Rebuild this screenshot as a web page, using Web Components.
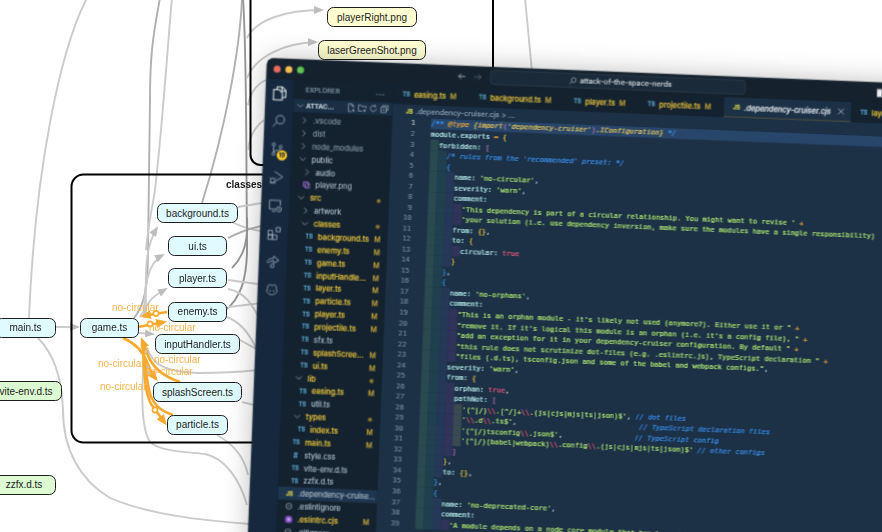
<!DOCTYPE html>
<html lang="en"><head><meta charset="utf-8"><title>Dependency graph and editor</title>
<style>
html,body{margin:0;padding:0;width:882px;height:532px;overflow:hidden;background:#fff}
</style></head>
<body>
<dep-graph>
  <graph-node x="327" y="7" w="90" h="20" kind="img">playerRight.png</graph-node>
  <graph-node x="318" y="40" w="108" h="20" kind="img">laserGreenShot.png</graph-node>
  <graph-node x="157" y="203" w="81" h="20">background.ts</graph-node>
  <graph-node x="168" y="236" w="59" h="20">ui.ts</graph-node>
  <graph-node x="168" y="268" w="59" h="20">player.ts</graph-node>
  <graph-node x="168" y="302" w="59" h="19.5">enemy.ts</graph-node>
  <graph-node x="80" y="317.5" w="59" h="20">game.ts</graph-node>
  <graph-node x="-5" y="317.5" w="61" h="20">main.ts</graph-node>
  <graph-node x="155" y="334" w="85" h="20">inputHandler.ts</graph-node>
  <graph-node x="153" y="382" w="89" h="20">splashScreen.ts</graph-node>
  <graph-node x="167" y="415" w="61" h="19.5">particle.ts</graph-node>
  <graph-node x="-10" y="381" w="72" h="20" kind="dts">vite-env.d.ts</graph-node>
  <graph-node x="-8" y="475" w="64" h="19.5" kind="dts">zzfx.d.ts</graph-node>
</dep-graph>

<vs-window>
  <activity-bar slot="activity"></activity-bar>
  <file-tree slot="tree"></file-tree>
  <tab-strip slot="tabs"></tab-strip>
  <bread-crumb slot="crumb"></bread-crumb>
  <code-view slot="code"></code-view>
</vs-window>

<script>
const FONT_UI = '"Inter","Liberation Sans",sans-serif';
const FONT_MONO = '"DejaVu Sans Mono","Liberation Mono",monospace';

/* ---------- dependency graph ---------- */
class DepGraph extends HTMLElement{
  constructor(){
    super();
    const gray=[
      ['M87,-2 C60,50 35,170 29,318'],
      ['M160,-2 C152,40 150,60 150,100 L148,250 C148,285 145,305 134,318','d'],
      ['M172,-2 C168,40 163,120 155,190 C152,210 148,225 146,250'],
      ['M146,318 C146,280 143,250 157,228','','url(#ag)'],
      ['M144,318 C144,290 146,264 163,255','','url(#ag)'],
      ['M140,317 C150,300 150,298 166,289','','url(#ag)'],
      ['M242,-2 C240,50 225,130 202,203','d'],
      ['M243,-2 C247,60 246,150 247,240 C248,280 240,300 224,311','k'],
      ['M247,38 C256,20 285,10 322,10','','url(#ag)'],
      ['M247,78 C256,56 285,43 316,42','','url(#ag)'],
      ['M266,80 C255,85 250,95 248,105'],
      ['M264,120 C255,127 250,135 248,150'],
      ['M525,-2 C528,30 530,50 532,72'],
      ['M238,207 L262,203'],
      ['M232,222 C240,226 250,230 262,231'],
      ['M228,238 C240,232 250,228 262,226','d'],
      ['M247,217 C248,240 245,255 232,268','k'],
      ['M228,280 L258,284'],
      ['M228,289 C245,292 252,305 258,316'],
      ['M228,307 L262,303'],
      ['M227,317 C240,322 250,335 256,348'],
      ['M240,340 L258,350'],
      ['M242,402 L258,406'],
      ['M56,327 L78,327','','url(#ag)'],
      ['M139,333 L153,334','','url(#ag)'],
      ['M38,338 C55,355 62,380 63,410 C63,450 80,480 110,498 C150,515 200,520 250,524'],
      ['M145,345 C140,400 142,430 150,442 C160,452 190,452 205,454 C225,458 240,480 247,505'],
      ['M147,347 C152,365 165,372 200,373 C225,373 240,372 258,370'],
      ['M217,435 C235,445 245,460 248,475'],
    ].map(([d,c,m])=>`<path class="e ${c||''}" d="${d}" ${m?`marker-end="${m}"`:''}/>`).join('');
    const orange=[
      ['M167,312 L143,316','url(#ao)'],
      ['M138,327 L164,322','url(#ao)'],
      ['M123,338 C135,343 143,352 147,362 C150,370 152,374 156,379','url(#ao)'],
      ['M180,382 C165,377 152,368 147,353 L142,340','url(#ao)'],
      ['M143,347 C144,375 145,392 151,404 L165,423','url(#ao)'],
      ['M173,415 C160,411 152,404 149,390 C146,375 145,360 143,350',''],
    ].map(([d,m])=>`<path class="o" d="${d}" ${m?`marker-end="${m}"`:''}/>`).join('');
    const rings=[[156,313.5],[150,324],[155,410]].map(([x,y])=>`<circle class="r" cx="${x}" cy="${y}" r="2.6"/>`).join('')
      +[[146,352],[148,367],[148.5,373]].map(([x,y])=>`<circle class="r2" cx="${x}" cy="${y}" r="2"/>`).join('');
    const labels=[[112,310.5],[149,330.5],[154,362.5],[98,366.5],[146,374.5],[100,389.5]]
      .map(([x,y])=>`<text class="l" x="${x}" y="${y}">no-circular</text>`).join('');
    this.attachShadow({mode:'open'}).innerHTML=`
    <style>
      :host{display:block;position:relative;width:882px;height:532px;overflow:hidden;filter:blur(.35px);font-family:"Liberation Sans",Arial,sans-serif}
      svg{position:absolute;left:0;top:0}
      .e{fill:none;stroke:#cbcbcb;stroke-width:1.9}
      .e.d{stroke:#b0b0b0}
      .e.k{stroke:#969696}
      .o{fill:none;stroke:#f7a92e;stroke-width:2.6}
      .r{fill:#fff;stroke:#f7a92e;stroke-width:1.6}
      .r2{fill:#c8c4b8;stroke:#f7a92e;stroke-width:1}
      .f{fill:none;stroke:#000;stroke-width:2}
      .t{font-size:10px;font-weight:700;fill:#1a1a1a}
      .l{font-size:10px;fill:#f9b44e}
    </style>
    <svg width="882" height="532" viewBox="0 0 882 532">
      <defs>
        <marker id="ag" markerWidth="10" markerHeight="8" refX="8" refY="4" orient="auto" markerUnits="userSpaceOnUse"><path d="M0,0 L10,4 L0,8 Z" fill="#bdbdbd"/></marker>
        <marker id="ao" markerWidth="11" markerHeight="9" refX="8" refY="4.5" orient="auto" markerUnits="userSpaceOnUse"><path d="M0,0 L11,4.5 L0,9 Z" fill="#f7a92e"/></marker>
      </defs>
      ${gray}
      <rect class="f" x="71.5" y="174.5" width="300" height="268" rx="12"/>
      <rect class="f" x="250.5" y="-30" width="242.5" height="195" rx="10"/>
      <text class="t" x="226" y="187.5">classes</text>
      ${orange}${rings}${labels}
    </svg>
    <slot></slot>`;
  }
}
customElements.define('dep-graph',DepGraph);

class GraphNode extends HTMLElement{
  constructor(){
    super();
    this.attachShadow({mode:'open'}).innerHTML=`
    <style>
      :host{position:absolute;display:flex;align-items:center;justify-content:center;box-sizing:border-box;
        border:1.2px solid #1e1e1e;border-radius:6.5px;background:#e0fbff;color:#1d1d1d;
        font:10px "Liberation Sans",Arial,sans-serif;white-space:nowrap}
      :host([kind="img"]){background:#ffffd2}
      :host([kind="dts"]){background:#dcfbd2}
    </style><slot></slot>`;
  }
  connectedCallback(){
    const a=n=>this.getAttribute(n)+'px';
    Object.assign(this.style,{left:a('x'),top:a('y'),width:a('w'),height:a('h')});
  }
}
customElements.define('graph-node',GraphNode);

/* ---------- VS Code window ---------- */
class VsWindow extends HTMLElement{
  constructor(){
    super();
    this.attachShadow({mode:'open'}).innerHTML=`
    <style>
      :host{position:absolute;left:267px;top:58px;width:1202px;height:900px;display:grid;
        grid-template-rows:35px 1fr;grid-template-columns:48px 170px 1fr;
        transform-origin:0 0;transform:rotate(2.29deg) scale(.585);
        border-radius:11px;overflow:hidden;background:#15222e;
        box-shadow:0 0 46px rgba(0,0,0,.26);color:#c5d4de;filter:blur(.22px);-webkit-text-stroke:.28px}
      .bar{grid-column:1/4;display:flex;align-items:center;position:relative;background:#15222e;min-width:0}
      .lights{display:flex;gap:8px;padding-left:12px}
      .lights i{width:12px;height:12px;border-radius:50%;display:block}
      .nav{display:flex;gap:11px;margin-left:262px;width:50px;flex:none}
      .search{margin-left:7px;width:436px;height:25px;box-sizing:border-box;border:1px solid #3a4a58;border-radius:6px;
        background:#1b2a38;display:flex;align-items:center;justify-content:center;gap:5px;padding-left:8px;
        font:12.4px ${FONT_UI};color:#d2dbe1}
      .layout{margin-left:auto;margin-right:142px;width:16px;height:14px;border:1.5px solid #eef2f5;box-sizing:border-box;background:linear-gradient(90deg,#eef2f5 50%,transparent 50%)}
      ::slotted([slot=activity]){grid-row:2;grid-column:1}
      ::slotted([slot=tree]){grid-row:2;grid-column:2}
      .main{grid-row:2;grid-column:3;display:flex;flex-direction:column;min-width:0;background:#1c3046}
    </style>
    <div class="bar">
      <div class="lights"><i style="background:#ee6a5f"></i><i style="background:#f5be4f"></i><i style="background:#62c554"></i></div>
      <div class="nav">
        <svg width="16" height="16" viewBox="0 0 16 16" fill="none" stroke="#c8d2da" stroke-width="1.3"><path d="M14 8H2.5M7 3.5 2.5 8 7 12.5"/></svg>
        <svg width="16" height="16" viewBox="0 0 16 16" fill="none" stroke="#5f7180" stroke-width="1.3"><path d="M2 8h11.5M9 3.5 13.5 8 9 12.5"/></svg>
      </div>
      <div class="search">
        <svg width="14" height="14" viewBox="0 0 16 16" fill="none" stroke="#c4ced6" stroke-width="1.2"><circle cx="9.5" cy="6.5" r="4.5"/><path d="M6.3 9.7 1.5 14.5"/></svg>
        <span>attack-of-the-space-nerds</span>
      </div>
      <div class="layout"></div>
    </div>
    <slot name="activity"></slot>
    <slot name="tree"></slot>
    <div class="main"><slot name="tabs"></slot><slot name="crumb"></slot><slot name="code"></slot></div>`;
  }
}
customElements.define('vs-window',VsWindow);

class ActivityBar extends HTMLElement{
  constructor(){
    super();
    const s='fill="none" stroke="#a9bccb" stroke-width="1.3"';
    const icons=[
      `<svg width="28" height="28" viewBox="0 0 24 24" fill="none" stroke="#f2f6f9" stroke-width="1.5"><path d="M8 7V3h8l5 5v10h-5"/><path d="M15 3v6h6"/><path d="M3 7h8l5 5v10H3z"/></svg>`,
      `<svg width="26" height="26" viewBox="0 0 24 24" ${s}><circle cx="14.5" cy="9.5" r="6.5"/><path d="M9.5 14 3 21"/></svg>`,
      `<svg width="26" height="26" viewBox="0 0 24 24" ${s}><circle cx="6" cy="4.5" r="2.3"/><circle cx="6" cy="19.5" r="2.3"/><circle cx="17" cy="8" r="2.3"/><path d="M6 7v10M17 10.5c0 4-11 3-11 6.5"/></svg><em>19</em>`,
      `<svg width="26" height="26" viewBox="0 0 24 24" ${s}><path d="M9 3l13 8-11 7"/><circle cx="6.5" cy="17" r="3.6"/><path d="M1.5 21h10M3 14l-1.5-1.5M10 14l1.5-1.5"/></svg>`,
      `<svg width="26" height="26" viewBox="0 0 24 24" ${s}><path d="M13 18H3V4h17v8"/><path d="M7 21.5h6"/><circle cx="18" cy="18" r="4"/><path d="M18 16v2.3l1.5 1"/></svg>`,
      `<svg width="26" height="26" viewBox="0 0 24 24" ${s}><rect x="2.5" y="7.5" width="7" height="7"/><rect x="2.5" y="14.5" width="7" height="7"/><rect x="9.5" y="14.5" width="7" height="7"/><rect x="15" y="2.5" width="6.5" height="6.5"/></svg>`,
      `<svg width="26" height="26" viewBox="0 0 24 24" ${s}><path d="M3 14c0-5 5-7 10-7V3.5L21 10l-8 5v-4c-4 0-6 1-8.500 4"/><circle cx="11" cy="19" r="2.800"/></svg>`,
      `<svg width="24" height="24" viewBox="0 0 24 24" ${s}><path d="M5 11c-2-5 1-7 4-7 1.500 0 2.500 1 3 2 .5-1 1.500-2 3-2 3 0 6 2 4 7 1.500 1 2 2.500 2 4-2 4-6 6-9 6s-7-2-9-6c0-1.500.5-3 2-4z"/><path d="M9 13v3M15 13v3"/></svg>`
    ];
    this.attachShadow({mode:'open'}).innerHTML=`
    <style>
      :host{display:flex;flex-direction:column;background:#15283d;position:relative}
      div{height:48px;display:flex;align-items:center;justify-content:center;position:relative;flex:none}
      div:first-child::before{content:"";position:absolute;left:0;top:0;bottom:0;width:2px;background:#e8eef2}
      em{position:absolute;left:23px;top:25px;width:18px;height:18px;border-radius:50%;background:#f3c62b;color:#182430;
        font:600 10px/18px ${FONT_UI};text-align:center}
    </style>${icons.map(i=>`<div>${i}</div>`).join('')}`;
  }
}
customElements.define('activity-bar',ActivityBar);

const ICON_STYLE=`
  .ti{font:700 9.500px ${FONT_UI};letter-spacing:0}
  .ts{color:#5aa2c6}.js{color:#d4d44e}
`;
class FileTree extends HTMLElement{
  constructor(){
    super();
    const R=`<svg width="16" height="16" viewBox="0 0 16 16" fill="none" stroke="#a9b8c4" stroke-width="1.2"><path d="M5.500 3 10.500 8 5.500 13"/></svg>`;
    const D=`<svg width="16" height="16" viewBox="0 0 16 16" fill="none" stroke="#a9b8c4" stroke-width="1.2"><path d="M3 5.500 8 10.500 13 5.500"/></svg>`;
    const rows=[
      [0,'r','.vscode','dim'],[0,'r','dist','dim'],[0,'r','node_modules','dim'],
      [0,'d','public','nor'],[1,'r','audio','nor'],[1,'png','player.png','dim2'],
      [0,'d','src','mod','dot'],[1,'r','artwork','nor'],[1,'d','classes','mod','dot'],
      [2,'ts','background.ts','mod','M'],[2,'ts','enemy.ts','mod','M'],[2,'ts','game.ts','mod','M'],
      [2,'ts','inputHandle...','mod','M'],[2,'ts','layer.ts','mod','M'],[2,'ts','particle.ts','mod','M'],
      [2,'ts','player.ts','mod','M'],[2,'ts','projectile.ts','mod','M'],[2,'ts','sfx.ts','nor'],
      [2,'ts','splashScree...','mod','M'],[2,'ts','ui.ts','mod','M'],
      [1,'d','lib','mod','dot'],[2,'ts','easing.ts','mod','M'],[2,'ts','util.ts','nor'],
      [1,'d','types','mod','dot'],[2,'ts','index.ts','mod','M'],
      [1,'ts','main.ts','mod','M'],[1,'css','style.css','nor'],[1,'ts','vite-env.d.ts','nor'],[1,'ts','zzfx.d.ts','nor'],
      [0,'js','.dependency-cruise...','nor','','sel'],[0,'ign','.eslintignore','nor'],[0,'pur','.eslintrc.cjs','mod','M'],[0,'ign','.gitignore','nor'],
    ];
    const ic=t=>({r:R,d:D,
      ts:'<span class="ti ts">TS</span>',js:'<span class="ti js">JS</span>',
      css:'<span class="ti" style="color:#5b9fc8;font-size:12px">#</span>',
      png:'<svg width="14" height="14" viewBox="0 0 16 16" fill="none" stroke="#a774d8" stroke-width="1.500"><path d="M2 2h9v9H2z"/><path d="M5 5h9v9H5z"/></svg>',
      ign:'<svg width="14" height="14" viewBox="0 0 16 16" fill="none" stroke="#6c7a84" stroke-width="2"><circle cx="8" cy="8" r="5.500"/><path d="M5 8h6"/></svg>',
      pur:'<svg width="15" height="15" viewBox="0 0 16 16"><circle cx="8" cy="8" r="7" fill="#7c4fc2"/><circle cx="8" cy="8" r="3" fill="#c7a8ee"/></svg>'
    }[t]);
    const html=rows.map(([l,t,n,c,b,sel])=>`<div class="row ${c} ${sel||''}" style="padding-left:${12+8*l}px"><span class="ic">${ic(t)}</span><span class="n">${n}</span>${b==='M'?'<span class="b">M</span>':b==='dot'?'<span class="b"><i></i></span>':''}</div>`).join('');
    const h=(d)=>`<svg width="16" height="16" viewBox="0 0 16 16" fill="none" stroke="#b8c6d1" stroke-width="1.100">${d}</svg>`;
    this.attachShadow({mode:'open'}).innerHTML=`
    <style>
      :host{display:flex;flex-direction:column;background:#14222f;overflow:hidden;font:12.7px ${FONT_UI};min-width:0}
      ${ICON_STYLE}
      .title{height:33px;display:flex;align-items:center;justify-content:space-between;padding:0 14px 0 20px;
        font-size:11px;letter-spacing:.3px;color:#8fa3b2;flex:none}
      .sec{height:22px;margin-bottom:3px;display:flex;align-items:center;background:#1a2f44;padding-left:4px;flex:none;
        font-weight:700;font-size:11px;color:#c3d0da;gap:2px}
      .sec span{flex:1}
      .sec .tools{display:flex;gap:3px;padding-right:6px}
      .row{height:22px;display:flex;align-items:center;flex:none;white-space:pre;color:#a8bac7}
      .ic{width:16px;height:16px;display:flex;align-items:center;justify-content:center;margin-right:7px;flex:none}
      .dim{color:#8597a4}.dim2{color:#a2b0bb}.nor{color:#aebfcb}.mod{color:#e6c43c;font-weight:500}
      .sel{background:#1f3650}
      .n{flex:1;min-width:0}
      .b{width:23px;flex:none;font-size:12px;color:#c8a93c;font-weight:500;display:flex;align-items:center}
      .b i{width:7px;height:7px;border-radius:50%;background:#8f7a2e;display:block;margin-left:2px}
    </style>
    <div class="title"><span>EXPLORER</span><span style="letter-spacing:1.500px;font-weight:700">...</span></div>
    <div class="sec">${D}<span>ATTAC...</span><div class="tools">
      ${h('<path d="M9 1.500H3.500v13h5M9 1.500l3.500 3.500v3M9 1.500V5h3.500M12 10v5M9.500 12.500h5"/>')}
      ${h('<path d="M1.500 3h4l1.500 2h7.500v3M8 13H1.500V3M12 9.500v5M9.500 12h5"/>')}
      ${h('<path d="M13 8a5 5 0 1 1-1.500-3.600M11.500 1.500v3h-3"/>')}
      ${h('<path d="M5 5V2h9v8h-3M2 5h9v9H2zM4.500 9.500h4"/>')}
    </div></div>
    ${html}`;
  }
}
customElements.define('file-tree',FileTree);

class TabStrip extends HTMLElement{
  constructor(){
    super();
    const tabs=[['ts','easing.ts'],['ts','background.ts'],['ts','player.ts'],['ts','projectile.ts'],['js','.dependency-cruiser.cjs',1],['ts','layer.ts']];
    this.attachShadow({mode:'open'}).innerHTML=`
    <style>
      :host{display:flex;height:35px;flex:none;background:#14222f;font:12.6px ${FONT_UI};overflow:hidden}
      ${ICON_STYLE}
      .tab{display:flex;align-items:center;padding:0 22px 0 16px;gap:7px;color:#e6c43c;font-weight:500;white-space:pre;flex:none}
      .tab .m{font-size:12px;color:#c8a93c}
      .tab.on{background:#1c3046;color:#e8eff4;border-bottom:1.500px solid #c8a93c;box-sizing:border-box;font-style:italic;font-size:12.8px;padding:0 9px 0 16px}
      .x{margin-left:2px;display:flex}
    </style>
    ${tabs.map(([k,n,on])=>`<div class="tab ${on?'on':''}"><span class="ti ${k}">${k.toUpperCase()}</span><span>${n}</span>${on?'<span class="x"><svg width="16" height="16" viewBox="0 0 16 16" stroke="#c8d2da" stroke-width="1.200"><path d="M3 3l10 10M13 3 3 13"/></svg></span>':'<span class="m">M</span>'}</div>`).join('')}`;
  }
}
customElements.define('tab-strip',TabStrip);

class BreadCrumb extends HTMLElement{
  constructor(){
    super();
    this.attachShadow({mode:'open'}).innerHTML=`
    <style>
      :host{display:flex;align-items:center;gap:5px;height:22px;flex:none;padding-left:23px;font:12.500px ${FONT_UI};color:#8aa2b4;background:#1c3046}
      ${ICON_STYLE}
    </style><span class="ti js">JS</span><span>.dependency-cruiser.cjs &gt; ...</span>`;
  }
}
customElements.define('bread-crumb',BreadCrumb);

class CodeView extends HTMLElement{
  constructor(){
    super();
    const L=[
      [0,"c:/** ¦a:@type¦i: {import¦k:(¦i:'dependency-cruiser'¦k:)¦i:.IConfiguration}¦c: */"],
      [0,"p:module.exports ¦o:= ¦y:{"],
      [1,"p:forbidden: ¦k:["],
      [2,"c:/* rules from the 'recommended' preset: */"],
      [2,"b:{"],
      [3,"p:name: ¦s:'no-circular'¦t:,"],
      [3,"p:severity: ¦s:'warn'¦t:,"],
      [3,"p:comment:"],
      [4,"s:'This dependency is part of a circular relationship. You might want to revise ' ¦o:+"],
      [4,"s:'your solution (i.e. use dependency inversion, make sure the modules have a single responsibility)"],
      [3,"p:from: ¦y:{}¦t:,"],
      [3,"p:to: ¦y:{"],
      [4,"p:circular: ¦T:true"],
      [3,"y:}"],
      [2,"b:}¦t:,"],
      [2,"b:{"],
      [3,"p:name: ¦s:'no-orphans'¦t:,"],
      [3,"p:comment:"],
      [4,"s:\"This is an orphan module - it's likely not used (anymore?). Either use it or \" ¦o:+"],
      [4,"s:\"remove it. If it's logical this module is an orphan (i.e. it's a config file), \" ¦o:+"],
      [4,"s:\"add an exception for it in your dependency-cruiser configuration. By default \" ¦o:+"],
      [4,"s:\"this rule does not scrutinize dot-files (e.g. .eslintrc.js), TypeScript declaration \" ¦o:+"],
      [4,"s:\"files (.d.ts), tsconfig.json and some of the babel and webpack configs.\"¦t:,"],
      [3,"p:severity: ¦s:'warn'¦t:,"],
      [3,"p:from: ¦y:{"],
      [4,"p:orphan: ¦T:true¦t:,"],
      [4,"p:pathNot: ¦k:["],
      [5,"s:'(^|/)¦e:\\\\¦s:.[^/]+¦e:\\\\¦s:.(js|cjs|mjs|ts|json)$'¦t:, ¦c:// dot files"],
      [5,"s:'¦e:\\\\¦s:.d¦e:\\\\¦s:.ts$'¦t:,                             ¦c:// TypeScript declaration files"],
      [5,"s:'(^|/)tsconfig¦e:\\\\¦s:.json$'¦t:,                 ¦c:// TypeScript config"],
      [5,"s:'(^|/)(babel|webpack)¦e:\\\\¦s:.config¦e:\\\\¦s:.(js|cjs|mjs|ts|json)$' ¦c:// other configs"],
      [4,"k:]"],
      [3,"y:}¦t:,"],
      [3,"p:to: ¦y:{}¦t:,"],
      [2,"b:}¦t:,"],
      [2,"b:{"],
      [3,"p:name: ¦s:'no-deprecated-core'¦t:,"],
      [3,"p:comment:"],
      [4,"s:'A module depends on a node core module that has been deprecated. Find an alternative - these are ' ¦o:+"],
    ];
    const band=['#2a4a50','#21404f','#263858','#30335a','#3a4a50'];
    const root=this.attachShadow({mode:'open'});
    root.innerHTML=`
    <style>
      :host{display:block;flex:1;min-height:0;overflow:hidden;font:12px/18px ${FONT_MONO};background:#1c3046;-webkit-text-stroke:.36px}
      .ln{display:flex;height:18px;white-space:pre;color:#a9c3cf}
      .ln.first{background:linear-gradient(90deg,transparent 67px,#28466a 67px)}
      .no{width:39.500px;text-align:right;color:#7d95a6;flex:none;-webkit-text-stroke:.1px}
      .first .no{color:#d3dde4}
      .sp{width:27.500px;flex:none}
      .g{width:14.448px;flex:none}
      .p{color:#b4e8e8}.t{color:#c2d3dd}.s{color:#aee673}.c{color:#3a90ec;font-style:italic}
      .o{color:#eda838}.y{color:#e8c63e}.k{color:#bd70b5}.b{color:#3f92ee}.T{color:#ec5a82}.e{color:#de566e}
      .a{color:#eeaa3e;font-style:italic}.i{color:#ecc85c;font-style:italic}
    </style>`;
    L.forEach(([ind,src],idx)=>{
      const d=document.createElement('div');
      d.className='ln'+(idx===0?' first':'');
      let h=`<span class="no">${idx+1}</span><span class="sp"></span>`;
      for(let k=0;k<ind;k++) h+=`<span class="g" style="background:${band[k]}"></span>`;
      d.innerHTML=h;
      src.split('¦').forEach(tok=>{
        const sp=document.createElement('span');
        sp.className=tok[0];
        sp.textContent=tok.slice(2);
        d.appendChild(sp);
      });
      root.appendChild(d);
    });
  }
}
customElements.define('code-view',CodeView);
</script>
</body></html>
